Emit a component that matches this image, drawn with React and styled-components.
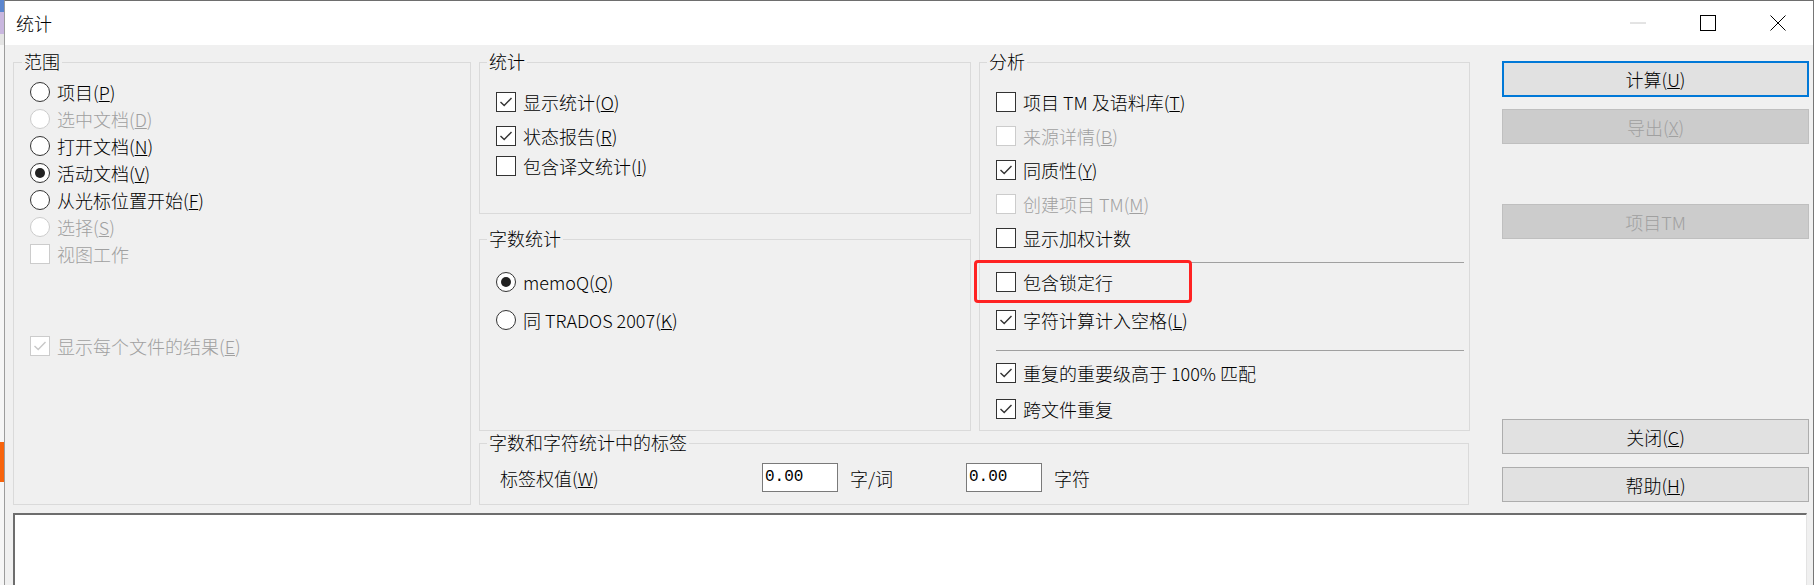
import React from "react";
import styled, { createGlobalStyle } from "styled-components";

const GlobalStyle = createGlobalStyle`
  html, body {
    margin: 0;
    padding: 0;
    height: 585px;
    overflow: hidden;
    background: #f6f6f6;
  }
  body {
    font-family: "Noto Sans CJK SC", "Noto Sans", sans-serif;
    font-weight: 300;
    font-size: 18px;
    color: #000;
  }
  * { box-sizing: border-box; }
`;

const Screen = styled.div`
  display: flex;
  height: 585px;
  overflow: hidden;
`;

const Backdrop = styled.div`
  width: 4px;
  display: flex;
  flex-direction: column;
  flex-shrink: 0;
`;

const Segment = styled.div`
  height: ${(p) => p.$h}px;
  background: ${(p) => p.$c};
  flex-shrink: 0;
`;

const Window = styled.div`
  flex: 1;
  display: flex;
  flex-direction: column;
  background: #f0f0f0;
  border-top: 1px solid #6e6e6e;
  border-left: 1px solid #9c9c9c;
  border-right: 1px solid #767676;
  min-width: 0;
`;

const TitleBar = styled.div`
  height: 44px;
  flex-shrink: 0;
  background: #fff;
  display: flex;
  align-items: center;
  padding-left: 11px;
`;

const Title = styled.div`
  flex: 1;
  font-size: 18px;
  line-height: 20px;
`;

const CaptionButton = styled.div`
  width: 70px;
  height: 44px;
  display: flex;
  align-items: center;
  justify-content: center;
`;

const Body = styled.div`
  display: flex;
  align-items: flex-start;
  padding: 8px 4px 0 8px;
  gap: 8px;
  flex-shrink: 0;
`;

const Group = styled.fieldset`
  margin: 0;
  padding: 0;
  min-width: 0;
  border: 1px solid #dadada;
  width: ${(p) => p.$w}px;
  height: ${(p) => p.$h}px;
  margin-top: ${(p) => p.$mt || 0}px;
  flex-shrink: 0;
`;

const Legend = styled.legend`
  margin-left: ${(p) => p.$ml || 7}px;
  padding: 0 2px;
  font-size: 18px;
  line-height: 16px;
  height: 18px;
`;

const GroupBody = styled.div`
  padding: ${(p) => p.$pt || 0}px 0 0 16px;
  display: flex;
  flex-direction: column;
  position: relative;
`;

const Center = styled.div`
  width: 991px;
  display: flex;
  flex-direction: column;
  flex-shrink: 0;
`;

const TopRow = styled.div`
  display: flex;
  gap: 8px;
`;

const MidCol = styled.div`
  display: flex;
  flex-direction: column;
  gap: 16px;
`;

const Row = styled.div`
  display: flex;
  align-items: center;
  height: ${(p) => p.$h || 28}px;
  margin-top: ${(p) => p.$mt || 0}px;
  position: relative;
  flex-shrink: 0;
`;

const Box = styled.span`
  width: 20px;
  height: 20px;
  border: 1px solid ${(p) => (p.$disabled ? "#cccccc" : "#333333")};
  background: #fff;
  margin-right: 7px;
  display: flex;
  align-items: center;
  justify-content: center;
  flex-shrink: 0;
`;

const Circle = styled(Box)`
  border-radius: 50%;
`;

const Dot = styled.span`
  width: 10px;
  height: 10px;
  border-radius: 50%;
  background: #222;
`;

const Text = styled.span`
  font-size: 18px;
  line-height: 20px;
  white-space: pre;
  color: ${(p) => (p.$disabled ? "#a0a0a0" : "#000")};
`;

const Separator = styled.div`
  height: 1px;
  background: #a0a0a0;
  margin: ${(p) => p.$mt}px 5px 0 0;
  flex-shrink: 0;
`;

const Highlight = styled.div`
  position: absolute;
  left: -22px;
  top: -8px;
  width: 218px;
  height: 43px;
  border: 3px solid #ff2222;
  border-radius: 4px;
  pointer-events: none;
`;

const TagRow = styled.div`
  display: flex;
  align-items: center;
  padding: 11px 0 0 20px;
`;

const TagLabel = styled.span`
  width: ${(p) => p.$w}px;
  font-size: 18px;
  line-height: 20px;
  flex-shrink: 0;
  white-space: pre;
`;

const NumBox = styled.div`
  width: 76px;
  height: 29px;
  border: 1px solid #7a7a7a;
  background: #fff;
  font-family: "Liberation Mono", monospace;
  font-weight: 400;
  font-size: 16px;
  line-height: 27px;
  padding-left: 2px;
  margin-right: 12px;
  flex-shrink: 0;
`;

const ButtonCol = styled.div`
  width: 307px;
  margin-left: 24px;
  display: flex;
  flex-direction: column;
  flex-shrink: 0;
`;

const Button = styled.div`
  height: ${(p) => (p.$primary ? 36 : 35)}px;
  margin-top: ${(p) => p.$mt}px;
  display: flex;
  align-items: center;
  justify-content: center;
  font-size: 18px;
  line-height: 20px;
  background: ${(p) => (p.$disabled ? "#cccccc" : "#e1e1e1")};
  border: ${(p) =>
    p.$primary
      ? "2px solid #0078d7"
      : p.$disabled
      ? "1px solid #bfbfbf"
      : "1px solid #adadad"};
  color: ${(p) => (p.$disabled ? "#a0a0a0" : "#000")};
`;

const Output = styled.div`
  margin: 8px 6px 0 8px;
  height: 110px;
  flex-shrink: 0;
  background: #fff;
  border-top: 2px solid #6d6d6d;
  border-left: 2px solid #6d6d6d;
  border-right: 1px solid #e3e3e3;
`;

const Mn = ({ k }) => (
  <>
    (<u>{k}</u>)
  </>
);

const Check = ({ checked, disabled, children, mt }) => (
  <Row $mt={mt}>
    <Box $disabled={disabled}>
      {checked && (
        <svg width="14" height="12" viewBox="0 0 14 12">
          <path
            d="M1.5 6 L5.2 9.6 L12.5 2"
            fill="none"
            stroke={disabled ? "#c8c8c8" : "#333"}
            strokeWidth="1.4"
          />
        </svg>
      )}
    </Box>
    <Text $disabled={disabled}>{children}</Text>
  </Row>
);

const Radio = ({ selected, disabled, children, mt, h }) => (
  <Row $mt={mt} $h={h}>
    <Circle $disabled={disabled}>{selected && <Dot />}</Circle>
    <Text $disabled={disabled}>{children}</Text>
  </Row>
);

const segments = [
  { h: 12, c: "#5b86cf" },
  { h: 22, c: "#c9b7df" },
  { h: 11, c: "#e4e4e4" },
  { h: 397, c: "#f6f6f6" },
  { h: 40, c: "#f7630c" },
  { h: 103, c: "#f6f6f6" },
];

export default function App() {
  return (
    <>
      <GlobalStyle />
      <Screen>
        <Backdrop>
          {segments.map((s, i) => (
            <Segment key={i} $h={s.h} $c={s.c} />
          ))}
        </Backdrop>
        <Window>
          <TitleBar>
            <Title>统计</Title>
            <CaptionButton>
              <svg width="16" height="2" viewBox="0 0 16 2">
                <line x1="0" y1="1" x2="16" y2="1" stroke="#c8c8c8" strokeWidth="1" />
              </svg>
            </CaptionButton>
            <CaptionButton>
              <svg width="16" height="16" viewBox="0 0 16 16">
                <rect x="0.5" y="0.5" width="15" height="15" fill="none" stroke="#000" strokeWidth="1" />
              </svg>
            </CaptionButton>
            <CaptionButton>
              <svg width="16" height="16" viewBox="0 0 16 16">
                <path d="M0.5 0.5 L15.5 15.5 M15.5 0.5 L0.5 15.5" stroke="#000" strokeWidth="1" />
              </svg>
            </CaptionButton>
          </TitleBar>

          <Body>
            <Group $w={458} $h={452}>
              <Legend $ml={8}>范围</Legend>
              <GroupBody $pt={7}>
                <Radio h={27}>
                  项目<Mn k="P" />
                </Radio>
                <Radio h={27} disabled>
                  选中文档<Mn k="D" />
                </Radio>
                <Radio h={27}>
                  打开文档<Mn k="N" />
                </Radio>
                <Radio h={27} selected>
                  活动文档<Mn k="V" />
                </Radio>
                <Radio h={27}>
                  从光标位置开始<Mn k="F" />
                </Radio>
                <Radio h={27} disabled>
                  选择<Mn k="S" />
                </Radio>
                <Row $h={27}>
                  <Box $disabled />
                  <Text $disabled>视图工作</Text>
                </Row>
                <Check checked disabled mt={65}>
                  显示每个文件的结果<Mn k="E" />
                </Check>
              </GroupBody>
            </Group>

            <Center>
              <TopRow>
                <MidCol>
                  <Group $w={492} $h={161}>
                    <Legend>统计</Legend>
                    <GroupBody $pt={17}>
                      <Check checked>
                        显示统计<Mn k="O" />
                      </Check>
                      <Check checked mt={6}>
                        状态报告<Mn k="R" />
                      </Check>
                      <Check mt={2}>
                        包含译文统计<Mn k="I" />
                      </Check>
                    </GroupBody>
                  </Group>
                  <Group $w={492} $h={201}>
                    <Legend>字数统计</Legend>
                    <GroupBody $pt={20}>
                      <Radio selected>
                        memoQ<Mn k="Q" />
                      </Radio>
                      <Radio mt={10}>
                        同 TRADOS 2007<Mn k="K" />
                      </Radio>
                    </GroupBody>
                  </Group>
                </MidCol>

                <Group $w={491} $h={378}>
                  <Legend>分析</Legend>
                  <GroupBody $pt={17}>
                    <Check>
                      项目 TM 及语料库<Mn k="T" />
                    </Check>
                    <Check disabled mt={6}>
                      来源详情<Mn k="B" />
                    </Check>
                    <Check checked mt={6}>
                      同质性<Mn k="Y" />
                    </Check>
                    <Check disabled mt={6}>
                      创建项目 TM<Mn k="M" />
                    </Check>
                    <Check mt={6}>显示加权计数</Check>
                    <Separator $mt={10} />
                    <Row $mt={5}>
                      <Box />
                      <Text>包含锁定行</Text>
                      <Highlight />
                    </Row>
                    <Check checked mt={10}>
                      字符计算计入空格<Mn k="L" />
                    </Check>
                    <Separator $mt={16} />
                    <Check checked mt={8}>
                      重复的重要级高于 100% 匹配
                    </Check>
                    <Check checked mt={8}>
                      跨文件重复
                    </Check>
                  </GroupBody>
                </Group>
              </TopRow>

              <Group $w={990} $h={71} $mt={3}>
                <Legend>字数和字符统计中的标签</Legend>
                <TagRow>
                  <TagLabel $w={262}>
                    标签权值<Mn k="W" />
                  </TagLabel>
                  <NumBox>0.00</NumBox>
                  <TagLabel $w={116}>字/词</TagLabel>
                  <NumBox>0.00</NumBox>
                  <TagLabel $w={60}>字符</TagLabel>
                </TagRow>
              </Group>
            </Center>

            <ButtonCol>
              <Button $primary $mt={8}>
                计算<Mn k="U" />
              </Button>
              <Button $disabled $mt={12}>
                导出<Mn k="X" />
              </Button>
              <Button $disabled $mt={60}>
                项目TM
              </Button>
              <Button $mt={180}>
                关闭<Mn k="C" />
              </Button>
              <Button $mt={13}>
                帮助<Mn k="H" />
              </Button>
            </ButtonCol>
          </Body>

          <Output />
        </Window>
      </Screen>
    </>
  );
}
